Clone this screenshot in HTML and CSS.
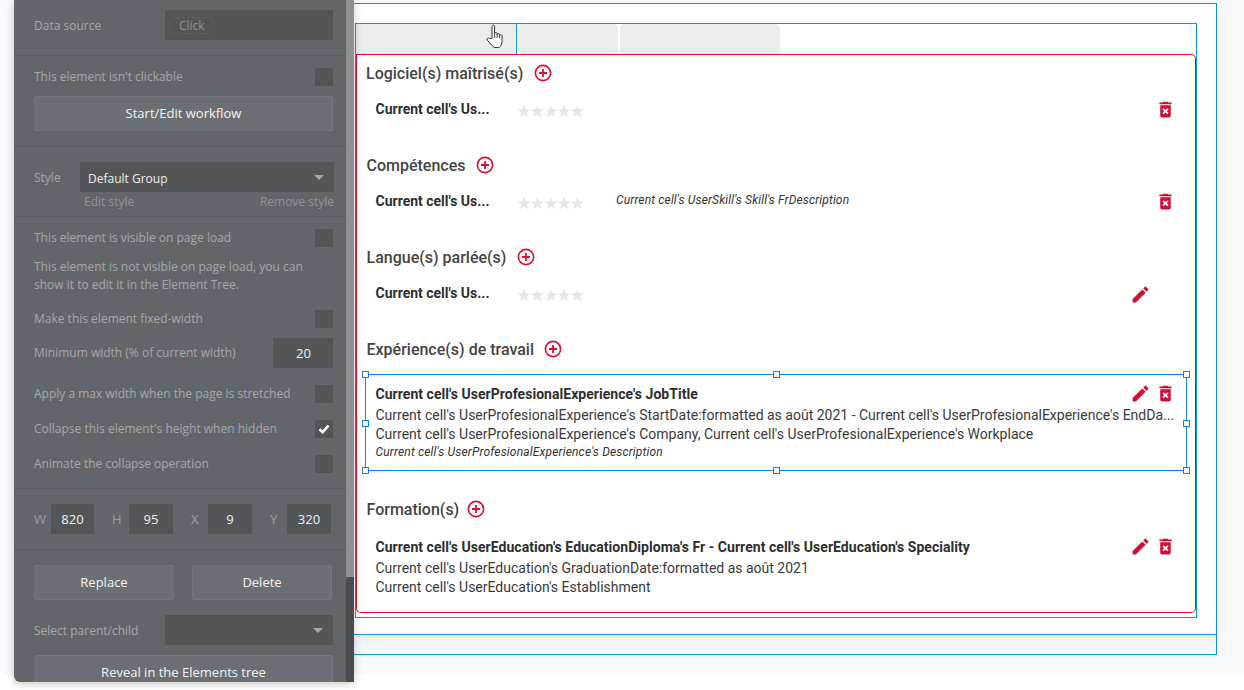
FILE: index.html
```html
<!DOCTYPE html>
<html lang="en">
<head>
    <meta charset="UTF-8">
    <title>Editor</title>
    <link rel="stylesheet" href="styles.css">
</head>
<body>

    <svg class="sprites" width="0" height="0">
        <symbol id="plus" viewBox="0 0 18 18">
            <circle cx="9" cy="9" r="7.6" fill="none" stroke="currentColor" stroke-width="1.6"/>
            <path d="M9 5v8M5 9h8" fill="none" stroke="currentColor" stroke-width="1.8"/>
        </symbol>
        <symbol id="edit" viewBox="0 0 24 24">
            <path d="M3 17.25V21h3.75L17.81 9.94l-3.75-3.75L3 17.25zM20.71 7.04c.39-.39.39-1.02 0-1.41l-2.34-2.34c-.39-.39-1.02-.39-1.41 0l-1.83 1.83 3.75 3.75 1.83-1.83z" fill="currentColor"/>
        </symbol>
        <symbol id="trash" viewBox="0 0 24 24">
            <path d="M6 19c0 1.1.9 2 2 2h8c1.1 0 2-.9 2-2V7H6v12zm2.46-7.12l1.41-1.41L12 12.59l2.12-2.12 1.41 1.41L13.41 14l2.12 2.12-1.41 1.41L12 15.41l-2.12 2.12-1.41-1.41L10.59 14l-2.13-2.12zM15.5 4l-1-1h-5l-1 1H5v2h14V4z" fill="currentColor"/>
        </symbol>
    </svg>

    <div class="canvas">
        <div class="page">
            <div class="page-main">
                <div class="group">
                    <div class="tabs">
                        <div class="tab tab-first"></div>
                        <div class="tab tab-second"></div>
                        <div class="tab tab-third"></div>
                    </div>
                    <div class="card">

                        <section class="section">
                            <h2 class="heading heading-first">Logiciel(s) maîtrisé(s) <svg class="icon-plus"><use href="#plus"/></svg></h2>
                            <div class="skill-row">
                                <b class="skill-name">Current cell's Us...</b>
                                <span class="stars">★★★★★</span>
                                <svg class="icon-trash"><use href="#trash"/></svg>
                            </div>
                        </section>

                        <section class="section">
                            <h2 class="heading">Compétences <svg class="icon-plus"><use href="#plus"/></svg></h2>
                            <div class="skill-row">
                                <b class="skill-name">Current cell's Us...</b>
                                <span class="stars">★★★★★</span>
                                <i class="skill-desc">Current cell's UserSkill's Skill's FrDescription</i>
                                <svg class="icon-trash"><use href="#trash"/></svg>
                            </div>
                        </section>

                        <section class="section">
                            <h2 class="heading">Langue(s) parlée(s) <svg class="icon-plus"><use href="#plus"/></svg></h2>
                            <div class="skill-row">
                                <b class="skill-name">Current cell's Us...</b>
                                <span class="stars">★★★★★</span>
                                <svg class="icon-edit icon-edit-alone"><use href="#edit"/></svg>
                            </div>
                        </section>

                        <section class="section section-tall">
                            <h2 class="heading heading-work">Expérience(s) de travail <svg class="icon-plus"><use href="#plus"/></svg></h2>
                            <div class="entry entry-selected">
                                <div class="entry-actions">
                                    <svg class="icon-edit"><use href="#edit"/></svg>
                                    <svg class="icon-trash"><use href="#trash"/></svg>
                                </div>
                                <b class="entry-title">Current cell's UserProfesionalExperience's JobTitle</b>
                                <div class="entry-line entry-clip">Current cell's UserProfesionalExperience's StartDate:formatted as août 2021 - Current cell's UserProfesionalExperience's EndDa...</div>
                                <div class="entry-line">Current cell's UserProfesionalExperience's Company, Current cell's UserProfesionalExperience's Workplace</div>
                                <i class="entry-desc">Current cell's UserProfesionalExperience's Description</i>
                                <span class="handle h-tl"></span><span class="handle h-tc"></span><span class="handle h-tr"></span>
                                <span class="handle h-ml"></span><span class="handle h-mr"></span>
                                <span class="handle h-bl"></span><span class="handle h-bc"></span><span class="handle h-br"></span>
                            </div>
                        </section>

                        <section class="section">
                            <h2 class="heading heading-school">Formation(s) <svg class="icon-plus"><use href="#plus"/></svg></h2>
                            <div class="entry entry-plain">
                                <div class="entry-actions">
                                    <svg class="icon-edit"><use href="#edit"/></svg>
                                    <svg class="icon-trash"><use href="#trash"/></svg>
                                </div>
                                <b class="entry-title">Current cell's UserEducation's EducationDiploma's Fr - Current cell's UserEducation's Speciality</b>
                                <div class="entry-line">Current cell's UserEducation's GraduationDate:formatted as août 2021</div>
                                <div class="entry-line">Current cell's UserEducation's Establishment</div>
                            </div>
                        </section>

                    </div>
                </div>
            </div>
        </div>

        <svg class="hand" viewBox="0 0 17 25" width="18" height="25">
            <path d="M5.5 14.5V2.6c0-2 2.6-2 2.6 0v7c0-1.500 2.500-1.500 2.500 0v1c0-1.500 2.400-1.400 2.400.1v1c0-1.400 2.500-1.300 2.500.4v5.400c0 2.200-.8 3.200-1.500 4.800-.3.800-1 1.200-2 1.200H8.500c-1 0-1.800-.5-2.400-1.300L.9 16.200c-1-1.500.8-3 2.200-1.800z" fill="#fff" stroke="#2b3040" stroke-width="1"/>
            <path d="M8.100 9.500v4.500M10.600 10.500v3.500M13 11.600v2.400" fill="none" stroke="#2b3040" stroke-width="0.9"/>
        </svg>
    </div>

    <aside class="panel">
        <div class="panel-body">
            <div class="block block-source">
                <div class="row">
                    <span class="label">Data source</span>
                    <div class="field field-source"><span class="click-box">Click</span></div>
                </div>
            </div>

            <div class="block block-click">
                <div class="row row-check">
                    <span class="label">This element isn't clickable</span>
                    <span class="check"></span>
                </div>
                <div class="btn btn-wide">Start/Edit workflow</div>
            </div>

            <div class="block block-style">
                <div class="row">
                    <span class="label">Style</span>
                    <div class="field field-style">Default Group<span class="arrow"></span></div>
                </div>
                <div class="style-links">
                    <span>Edit style</span>
                    <span>Remove style</span>
                </div>
            </div>

            <div class="block block-options">
                <div class="row row-check">
                    <span class="label">This element is visible on page load</span>
                    <span class="check"></span>
                </div>
                <p class="note">This element is not visible on page load, you can show it to edit it in the Element Tree.</p>
                <div class="row row-check row-fixed">
                    <span class="label">Make this element fixed-width</span>
                    <span class="check"></span>
                </div>
                <div class="row row-min">
                    <span class="label">Minimum width (% of current width)</span>
                    <div class="field field-num">20</div>
                </div>
                <div class="row row-check row-max">
                    <span class="label">Apply a max width when the page is stretched</span>
                    <span class="check"></span>
                </div>
                <div class="row row-check row-next">
                    <span class="label">Collapse this element's height when hidden</span>
                    <span class="check">
                        <svg viewBox="0 0 12 10" width="12" height="10"><path d="M1.500 5.200l3.200 3 5.800-6.700" fill="none" stroke="#fff" stroke-width="2.600"/></svg>
                    </span>
                </div>
                <div class="row row-check row-next">
                    <span class="label">Animate the collapse operation</span>
                    <span class="check"></span>
                </div>
            </div>

            <div class="block block-size">
                <span class="size-label">W</span><div class="field field-size">820</div>
                <span class="size-label">H</span><div class="field field-size">95</div>
                <span class="size-label">X</span><div class="field field-size">9</div>
                <span class="size-label">Y</span><div class="field field-size">320</div>
            </div>

            <div class="block block-actions">
                <div class="btn-row">
                    <div class="btn btn-half">Replace</div>
                    <div class="btn btn-half">Delete</div>
                </div>
                <div class="row row-parent">
                    <span class="label">Select parent/child</span>
                    <div class="field field-source"><span class="arrow"></span></div>
                </div>
                <div class="btn btn-wide btn-reveal">Reveal in the Elements tree</div>
            </div>
        </div>
        <div class="scrollbar"><div class="scrollbar-thumb"></div></div>
    </aside>

</body>
</html>
```

FILE: styles.css
```css
* {
    box-sizing: border-box;
}
body {
    margin: 0;
    height: 690px;
    overflow: hidden;
    background: #fff;
    color: #3a3a3a;
    font-family: Roboto, sans-serif;
}
.sprites {
    position: absolute;
}

/* Canvas */
.canvas {
    position: relative;
    height: 674px;
    padding: 3px 0 0 354px;
    background: #f8f9fb;
}
.page {
    width: 863px;
    height: 652px;
    border-top: 1px solid #0d9bc9;
    border-right: 1px solid #0d9bc9;
    border-bottom: 1px solid #0d9bc9;
}
.page-main {
    height: 631px;
    padding: 19px 0 0 1px;
    background: #fff;
    border-bottom: 1px solid #0d9bc9;
    box-shadow: 0 4px 14px rgba(0, 0, 0, 0.08);
}
.group {
    width: 842px;
    height: 595px;
    border: 1px solid #0d9bc9;
}
.tabs {
    display: flex;
    height: 30px;
}
.tab {
    height: 30px;
    background: #ececec;
    border-radius: 5px 5px 0 0;
}
.tab-first {
    width: 161px;
    margin-right: 1px;
    border-right: 1px solid #0d9bc9;
    border-radius: 0;
}
.tab-second {
    width: 100px;
    margin-right: 2px;
}
.tab-third {
    width: 160px;
}
.card {
    width: 840px;
    height: 559px;
    border: 1px solid #dc0f33;
    border-right-color: #b3143a;
    border-radius: 0 5px 5px 5px;
}

/* Sections */
.section {
    height: 92px;
    padding-top: 9px;
}
.section-tall {
    height: 160px;
}
.heading {
    display: flex;
    align-items: center;
    gap: 5px;
    height: 18px;
    margin: 0 0 0 9.5px;
    font-size: 16px;
    font-weight: 500;
    color: #444;
}
.heading-first {
    margin-left: 9px;
}
.icon-plus {
    width: 18px;
    height: 18px;
    margin-left: 5.5px;
    color: #dc0f33;
}
.heading-work .icon-plus {
    margin-left: 4.5px;
}
.heading-school .icon-plus {
    margin-left: 2.5px;
}
.icon-edit {
    width: 21px;
    height: 21px;
    color: #d20f33;
}
.icon-trash {
    width: 21px;
    height: 21px;
    color: #d20f33;
}
.skill-row {
    position: relative;
    display: flex;
    align-items: center;
    height: 20px;
    margin: 17px 0 0 18.5px;
}
.skill-name {
    width: 141px;
    font-size: 14px;
    font-weight: 700;
    color: #2e2e2e;
}
.stars {
    width: 99.5px;
    margin-top: 3px;
    font-family: "DejaVu Sans", sans-serif;
    font-size: 17px;
    letter-spacing: -1.9px;
    color: #e6e6e6;
}
.skill-desc {
    margin-top: -3px;
    font-size: 12px;
    letter-spacing: 0.15px;
    color: #333;
}
.skill-row .icon-trash {
    position: absolute;
    left: 779.5px;
    top: 0;
}
.skill-row .icon-edit-alone {
    position: absolute;
    left: 754.5px;
    top: 0.5px;
}

/* Entries */
.entry {
    position: relative;
    width: 822px;
}
.entry-selected {
    height: 97px;
    margin: 16px 0 0 8px;
    padding: 10px 9.5px 0;
    border: 1px solid #1383e0;
}
.entry-plain {
    margin: 18px 0 0 9px;
    padding: 2px 9.5px 0;
}
.entry-title {
    display: block;
    height: 21px;
    font-size: 14px;
    line-height: 18px;
    font-weight: 700;
    letter-spacing: 0.04px;
    color: #2e2e2e;
}
.entry-line {
    height: 19px;
    font-size: 14px;
    line-height: 19px;
    color: #3a3a3a;
}
.entry-clip {
    width: 799px;
    white-space: nowrap;
}
.entry-desc {
    display: block;
    font-size: 12px;
    line-height: 16px;
    letter-spacing: 0.17px;
    color: #333;
}
.entry-actions {
    position: absolute;
    display: flex;
    align-items: center;
    gap: 4px;
    top: 8px;
    left: 764px;
}
.entry-plain .entry-actions {
    top: 0;
}
.handle {
    position: absolute;
    width: 7px;
    height: 7px;
    background: #fff;
    border: 1px solid #1383e0;
}
.h-tl { left: -4px; top: -4px; }
.h-tc { left: 407px; top: -4px; }
.h-tr { right: -4px; top: -4px; }
.h-ml { left: -4px; top: 45px; }
.h-mr { right: -4px; top: 45px; }
.h-bl { left: -4px; bottom: -4px; }
.h-bc { left: 407px; bottom: -4px; }
.h-br { right: -4px; bottom: -4px; }
.hand {
    position: absolute;
    left: 486px;
    top: 24px;
}

/* Property panel */
.panel {
    position: absolute;
    left: 14px;
    top: 0;
    display: flex;
    width: 340px;
    height: 682px;
    overflow: hidden;
    background: #62666a;
    border-radius: 0 0 0 6px;
    box-shadow: 0 2px 8px rgba(0, 0, 0, 0.22);
    font-family: "Open Sans", sans-serif;
    font-size: 12px;
    color: #a4a7aa;
}
.panel-body {
    width: 332px;
}
.scrollbar {
    width: 8px;
    background: #4a4d50;
}
.scrollbar-thumb {
    height: 577px;
    background: #8f9295;
}
.block {
    padding: 0 13px 0 20px;
    border-bottom: 1px solid #595d61;
}
.block-source {
    height: 56px;
    padding-top: 10px;
}
.block-click {
    height: 91px;
    padding-top: 12px;
}
.block-style {
    height: 70px;
    padding-top: 15px;
}
.block-options {
    height: 272px;
    padding-top: 12px;
}
.block-size {
    display: flex;
    align-items: center;
    height: 61px;
    padding-right: 0;
}
.block-actions {
    padding-top: 15px;
    border-bottom: 0;
}
.row {
    display: flex;
    align-items: center;
    justify-content: space-between;
}
.row-check {
    height: 18px;
}
.row-check .label,
.row-min .label {
    margin-bottom: 2px;
}
.row-fixed {
    margin-top: 16px;
}
.row-min {
    height: 30px;
    margin-top: 10px;
}
.row-max {
    margin-top: 17px;
}
.row-next {
    margin-top: 17px;
}
.row-parent {
    margin-top: 15px;
}
.check {
    display: flex;
    align-items: center;
    justify-content: center;
    width: 18px;
    height: 18px;
    background: #525659;
}
.field {
    position: relative;
    height: 30px;
    background: #525659;
    color: #fff;
}
.field-source {
    width: 168px;
}
.click-box {
    display: block;
    width: 44px;
    height: 17px;
    margin: 7px 0 0 4px;
    padding-left: 9px;
    line-height: 15px;
    border: 1px dashed #5f6366;
    border-radius: 3px;
    color: #8d9093;
}
.field-style {
    width: 254px;
    margin-right: -1px;
    padding-left: 8px;
    line-height: 33px;
    color: #eee;
}
.field-num {
    width: 60px;
    padding-left: 23px;
    font-size: 13px;
    line-height: 30px;
    color: #f2f2f2;
}
.arrow {
    position: absolute;
    right: 10px;
    top: 13px;
    border-left: 5px solid transparent;
    border-right: 5px solid transparent;
    border-top: 5px solid #a4a7aa;
}
.style-links {
    display: flex;
    justify-content: space-between;
    margin: 0 -1px 0 50px;
    line-height: 19px;
    color: #8f9295;
}
.note {
    margin: 11px 0 0;
    line-height: 18px;
}
.btn {
    text-align: center;
    background: #6b6f73;
    border: 1px solid #74787c;
    border-radius: 2px;
    font-size: 13px;
    color: #f4f4f4;
}
.btn-wide {
    width: 299px;
    height: 35px;
    margin-top: 10px;
    line-height: 33px;
}
.btn-reveal {
    margin-top: 10px;
}
.btn-row {
    display: flex;
    justify-content: space-between;
    width: 298px;
}
.btn-half {
    width: 140px;
    height: 35px;
    line-height: 33px;
}
.size-label {
    width: 17px;
    font-size: 13px;
    color: #9b9ea1;
}
.size-label:nth-child(n+3) {
    margin-left: 18px;
}
.field-size {
    width: 44px;
    text-align: center;
    font-size: 13px;
    line-height: 30px;
    color: #f2f2f2;
}
.field-size:nth-child(2) {
    width: 43px;
}
```
